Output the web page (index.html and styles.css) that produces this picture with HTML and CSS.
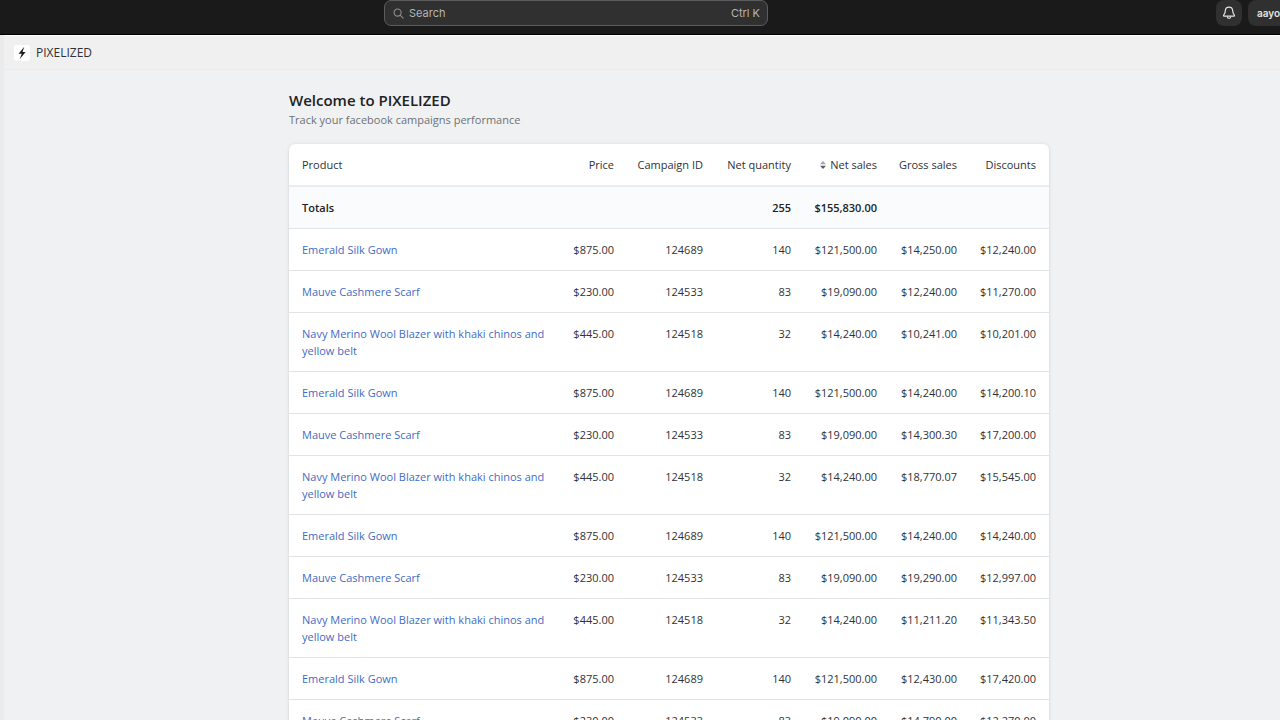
FILE: index.html
```
<!DOCTYPE html>
<html lang="en">
<head>
    <meta charset="UTF-8">
    <title>PIXELIZED</title>
    <meta name="viewport" content="width=device-width, initial-scale=1">
    <link rel="stylesheet" href="styles.css">
</head>
<body>
<header class="topbar">
    <form class="search" role="search">
        <svg class="search-icon" viewBox="0 0 12 12" aria-hidden="true">
            <circle cx="5" cy="5" r="3.9"/>
            <path d="M8 8l3 3"/>
        </svg>
        <input type="search" placeholder="Search" aria-label="Search">
        <span class="shortcut">Ctrl K</span>
    </form>
    <div class="topbar-actions">
        <button type="button" class="bell" aria-label="Notifications">
            <svg viewBox="0 0 14 14" aria-hidden="true">
                <path d="M7 1.2c-2.300 0-3.600 1.700-3.700 3.700-.1 2-.5 2.800-1.500 3.900-.5.600-.2 1.400.6 1.400h9.200c.8 0 1.100-.8.600-1.400-1-1.100-1.400-1.900-1.500-3.900C10.600 2.900 9.300 1.200 7 1.200z"/>
                <path d="M5.200 10.500c.1 1.200.8 1.900 1.800 1.900s1.700-.7 1.800-1.900"/>
            </svg>
        </button>
        <button type="button" class="store">aayo</button>
    </div>
</header>

<div class="frame">
    <div class="titlebar">
        <span class="app-icon">
            <svg viewBox="0 0 16 16" aria-hidden="true">
                <path d="M10.300 1.800L4.600 8.700h3.200l-2.200 5.600 6-7.300H8.500z"/>
            </svg>
        </span>
        <span>PIXELIZED</span>
    </div>

    <main class="page">
        <h1>Welcome to PIXELIZED</h1>
        <p class="subtitle">Track your facebook campaigns performance</p>

        <div class="card">
            <table>
                <colgroup>
                    <col>
                    <col class="col-price">
                    <col class="col-campaign">
                    <col class="col-quantity">
                    <col class="col-net">
                    <col class="col-gross">
                    <col class="col-discounts">
                </colgroup>
                <thead>
                    <tr class="headings">
                        <th scope="col">Product</th>
                        <th scope="col">Price</th>
                        <th scope="col">Campaign ID</th>
                        <th scope="col">Net quantity</th>
                        <th scope="col">
                            <button type="button" class="sort">
                                <svg viewBox="0 0 6 8" aria-hidden="true">
                                    <path class="up" d="M0 3.300L3 0l3 3.300z"/>
                                    <path class="down" d="M0 4.700L3 8l3-3.300z"/>
                                </svg>
                                Net sales
                            </button>
                        </th>
                        <th scope="col">Gross sales</th>
                        <th scope="col">Discounts</th>
                    </tr>
                    <tr class="totals">
                        <th scope="row">Totals</th>
                        <td></td>
                        <td></td>
                        <td>255</td>
                        <td>$155,830.00</td>
                        <td></td>
                        <td></td>
                    </tr>
                </thead>
                <tbody>
                    <tr>
                        <th scope="row"><a href="#">Emerald Silk Gown</a></th>
                        <td>$875.00</td><td>124689</td><td>140</td>
                        <td>$121,500.00</td><td>$14,250.00</td><td>$12,240.00</td>
                    </tr>
                    <tr>
                        <th scope="row"><a href="#">Mauve Cashmere Scarf</a></th>
                        <td>$230.00</td><td>124533</td><td>83</td>
                        <td>$19,090.00</td><td>$12,240.00</td><td>$11,270.00</td>
                    </tr>
                    <tr>
                        <th scope="row"><a href="#">Navy Merino Wool Blazer with khaki chinos and yellow belt</a></th>
                        <td>$445.00</td><td>124518</td><td>32</td>
                        <td>$14,240.00</td><td>$10,241.00</td><td>$10,201.00</td>
                    </tr>
                    <tr>
                        <th scope="row"><a href="#">Emerald Silk Gown</a></th>
                        <td>$875.00</td><td>124689</td><td>140</td>
                        <td>$121,500.00</td><td>$14,240.00</td><td>$14,200.10</td>
                    </tr>
                    <tr>
                        <th scope="row"><a href="#">Mauve Cashmere Scarf</a></th>
                        <td>$230.00</td><td>124533</td><td>83</td>
                        <td>$19,090.00</td><td>$14,300.30</td><td>$17,200.00</td>
                    </tr>
                    <tr>
                        <th scope="row"><a href="#">Navy Merino Wool Blazer with khaki chinos and yellow belt</a></th>
                        <td>$445.00</td><td>124518</td><td>32</td>
                        <td>$14,240.00</td><td>$18,770.07</td><td>$15,545.00</td>
                    </tr>
                    <tr>
                        <th scope="row"><a href="#">Emerald Silk Gown</a></th>
                        <td>$875.00</td><td>124689</td><td>140</td>
                        <td>$121,500.00</td><td>$14,240.00</td><td>$14,240.00</td>
                    </tr>
                    <tr>
                        <th scope="row"><a href="#">Mauve Cashmere Scarf</a></th>
                        <td>$230.00</td><td>124533</td><td>83</td>
                        <td>$19,090.00</td><td>$19,290.00</td><td>$12,997.00</td>
                    </tr>
                    <tr>
                        <th scope="row"><a href="#">Navy Merino Wool Blazer with khaki chinos and yellow belt</a></th>
                        <td>$445.00</td><td>124518</td><td>32</td>
                        <td>$14,240.00</td><td>$11,211.20</td><td>$11,343.50</td>
                    </tr>
                    <tr>
                        <th scope="row"><a href="#">Emerald Silk Gown</a></th>
                        <td>$875.00</td><td>124689</td><td>140</td>
                        <td>$121,500.00</td><td>$12,430.00</td><td>$17,420.00</td>
                    </tr>
                    <tr>
                        <th scope="row"><a href="#">Mauve Cashmere Scarf</a></th>
                        <td>$230.00</td><td>124533</td><td>83</td>
                        <td>$19,090.00</td><td>$14,790.00</td><td>$12,270.00</td>
                    </tr>
                </tbody>
            </table>
        </div>
    </main>
</div>
</body>
</html>
```
FILE: styles.css
```
* {
    box-sizing: border-box;
}

html {
    height: 100%;
    overflow: hidden;
}

body {
    margin: 0;
    min-height: 100%;
    background: #f0f1f3;
    color: #303236;
    font: 11px/17px "Open Sans", "Noto Sans", sans-serif;
}

button {
    padding: 0;
    border: 0;
    color: inherit;
    font: inherit;
}

/* top bar */
.topbar {
    display: grid;
    grid-template-columns: 30% 30% 1fr;
    height: 35px;
    background: #1a1a1a;
    border-bottom: 1px solid #000;
    font-family: Inter, sans-serif;
    overflow: hidden;
}

.search {
    grid-column: 2;
    display: flex;
    align-items: center;
    gap: 5px;
    height: 26px;
    padding: 0 7px 0 8px;
    background: #303030;
    border: 1px solid #5c5c5c;
    border-radius: 7px;
    color: #b5b5b5;
}

.search-icon {
    width: 11px;
    height: 11px;
    fill: none;
    stroke: #8f8f8f;
    stroke-width: 1.2;
    stroke-linecap: round;
}

.search input {
    flex: 1;
    min-width: 0;
    padding: 0;
    border: 0;
    outline: 0;
    background: none;
    color: inherit;
    font: inherit;
}

.search input::placeholder {
    color: inherit;
}

.topbar-actions {
    display: flex;
    justify-content: flex-end;
    gap: 6px;
    margin-right: -48px;
}

.topbar-actions button {
    height: 26px;
    background: #303030;
    border-radius: 8px;
    color: #e3e3e3;
}

.bell {
    display: flex;
    align-items: center;
    justify-content: center;
    width: 26px;
}

.bell svg {
    width: 14px;
    height: 14px;
    fill: none;
    stroke: #e3e3e3;
    stroke-width: 1.2;
}

.topbar-actions .store {
    width: 80px;
    padding-left: 9px;
    font-size: 10px;
    font-weight: 600;
    text-align: left;
}

/* app frame */
.frame {
    border-left: 4px solid #ebebeb;
}

.titlebar {
    display: flex;
    align-items: center;
    gap: 6px;
    height: 35px;
    padding: 0 10px;
    background: #f0f0f0;
    border-top: 1px solid #fff;
    border-bottom: 1px solid #ebebeb;
    font-size: 12px;
}

.app-icon {
    display: flex;
    width: 16px;
    height: 16px;
    background: #fff;
    border-radius: 3px;
}

.app-icon svg {
    width: 16px;
    height: 16px;
    fill: #1a1a1a;
}

/* the frame runs past the right edge, so the column sits right of centre */
.page {
    width: calc(100% + 54px);
    padding: 20px 285px;
}

h1 {
    margin: 0;
    color: #202223;
    font-size: 15px;
    line-height: 20px;
    font-weight: 600;
}

.subtitle {
    margin: 0 0 15px;
    line-height: 19px;
    color: #6d7175;
}

.card {
    background: #fff;
    border-radius: 6px;
    box-shadow: 0 0 4px rgba(23, 24, 24, .08), 0 1px 2px rgba(0, 0, 0, .1);
    overflow: hidden;
}

table {
    width: 100%;
    table-layout: fixed;
    border-collapse: separate;
    border-spacing: 0;
}

.col-price {
    width: 65px;
}

.col-campaign {
    width: 89px;
}

.col-quantity {
    width: 88px;
}

.col-net {
    width: 86px;
}

.col-gross {
    width: 80px;
}

.col-discounts {
    width: 79px;
}

th,
td {
    padding: 12px 13px 12px 6px;
    border-bottom: 1px solid #e1e3e5;
    font-weight: 400;
    text-align: right;
    vertical-align: top;
    white-space: nowrap;
}

th:first-child {
    padding-left: 13px;
    text-align: left;
    white-space: normal;
}

.headings th {
    border-bottom: 2px solid #ebecee;
}

.totals th,
.totals td {
    background: #fafbfc;
    color: #202223;
    font-weight: 600;
}

th a {
    color: #3f6cc4;
    text-decoration: none;
}

.sort {
    background: none;
}

.sort svg {
    width: 6px;
    height: 8px;
    margin-right: 1px;
}

.sort .up {
    fill: #a3a6ac;
}

.sort .down {
    fill: #5c5f62;
}
```
